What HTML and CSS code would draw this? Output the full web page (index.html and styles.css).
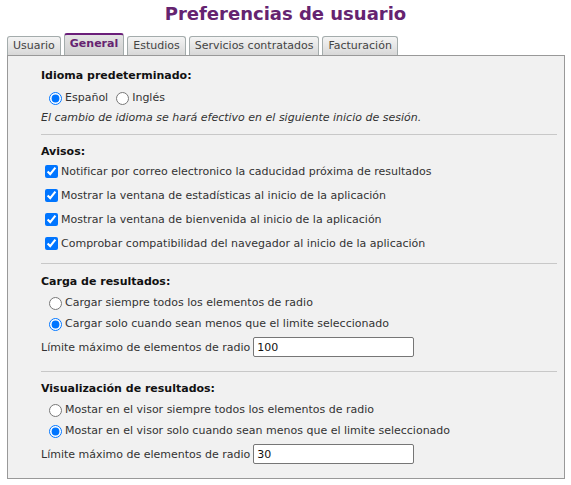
FILE: index.html
```html
<!DOCTYPE html>
<html lang="es">
<head>
<meta charset="utf-8">
<title>Preferencias de usuario</title>
<link rel="stylesheet" href="styles.css">
</head>
<body>
<h1 class="title">Preferencias de usuario</h1>
<div class="tabs">
  <div class="tab">Usuario</div>
  <div class="tab active">General</div>
  <div class="tab">Estudios</div>
  <div class="tab">Servicios contratados</div>
  <div class="tab">Facturación</div>
</div>
<div class="panel">
  <section class="group g-lang">
    <div class="heading">Idioma predeterminado:</div>
    <div class="inline-opts">
      <label class="opt"><input type="radio" name="lang" checked>Español</label>
      <label class="opt"><input type="radio" name="lang">Inglés</label>
    </div>
    <div class="note">El cambio de idioma se hará efectivo en el siguiente inicio de sesión.</div>
  </section>
  <section class="group g-avisos">
    <div class="heading">Avisos:</div>
    <div class="checks">
      <label class="chk"><input type="checkbox" checked>Notificar por correo electronico la caducidad próxima de resultados</label>
      <label class="chk"><input type="checkbox" checked>Mostrar la ventana de estadísticas al inicio de la aplicación</label>
      <label class="chk"><input type="checkbox" checked>Mostrar la ventana de bienvenida al inicio de la aplicación</label>
      <label class="chk"><input type="checkbox" checked>Comprobar compatibilidad del navegador al inicio de la aplicación</label>
    </div>
  </section>
  <section class="group g-carga">
    <div class="heading">Carga de resultados:</div>
    <div class="radios">
      <label class="opt"><input type="radio" name="carga">Cargar siempre todos los elementos de radio</label>
      <label class="opt"><input type="radio" name="carga" checked>Cargar solo cuando sean menos que el limite seleccionado</label>
    </div>
    <div class="limit"><span>Límite máximo de elementos de radio</span><input class="num" type="text" value="100"></div>
  </section>
  <section class="group last">
    <div class="heading">Visualización de resultados:</div>
    <div class="radios">
      <label class="opt"><input type="radio" name="vis">Mostar en el visor siempre todos los elementos de radio</label>
      <label class="opt"><input type="radio" name="vis" checked>Mostar en el visor solo cuando sean menos que el limite seleccionado</label>
    </div>
    <div class="limit"><span>Límite máximo de elementos de radio</span><input class="num" type="text" value="30"></div>
  </section>
</div>
</body>
</html>
```
FILE: styles.css
```css
html, body { margin: 0; padding: 0; background: #fff; }
body {
  font-family: "DejaVu Sans", Verdana, sans-serif;
  font-size: 11px;
  color: #333;
}
.title {
  margin: 0;
  padding-top: 2px;
  height: 31px;
  text-align: center;
  font-size: 18px;
  font-weight: bold;
  color: #652370;
  line-height: 24px;
}
.tabs {
  display: flex;
  align-items: flex-end;
  gap: 3px;
  padding-left: 7px;
  height: 22px;
}
.tab {
  height: 18px;
  line-height: 18px;
  padding: 0 5px;
  border: 1px solid #a4acac;
  border-bottom: none;
  border-radius: 3px 3px 0 0;
  background: linear-gradient(#f4f4f4, #d8d8d8);
  color: #444;
  font-size: 11px;
}
.tab.active {
  height: 20px;
  border-top: 2px solid #6b1f7a;
  font-weight: bold;
  color: #652370;
  background: linear-gradient(#e4e4e4, #d0d0d0);
}
.panel {
  margin: 0 6px 0 7px;
  border: 1px solid #999;
  background: #f1f1f1;
  padding: 11px 7px 14px 33px;
}
.group {
  border-bottom: 1px solid #c8c8c8;
  padding-bottom: 8px;
  margin-bottom: 8px;
}
.g-avisos { padding-bottom: 11px; margin-bottom: 9px; }
.g-carga { padding-bottom: 14px; }
.group.last { border-bottom: none; margin-bottom: 0; padding-bottom: 0; }
.heading {
  font-weight: bold;
  color: #111;
  font-size: 11px;
  line-height: 18px;
}
.inline-opts {
  display: flex;
  gap: 8px;
  padding-left: 8px;
  margin-top: 5px;
  line-height: 16px;
}
.opt, .chk {
  display: flex;
  align-items: center;
}
.opt input, .chk input {
  margin: 0 3px 0 0;
  width: 13px;
  height: 13px;
}
.note {
  font-style: italic;
  margin-top: 4px;
  line-height: 16px;
}
.checks {
  display: flex;
  flex-direction: column;
  gap: 7px;
  padding-left: 4px;
  margin-top: 2px;
}
.checks .chk { line-height: 17px; }
.radios {
  display: flex;
  flex-direction: column;
  gap: 5px;
  padding-left: 8px;
  margin-top: 4px;
}
.radios .opt { line-height: 16px; }
.limit {
  display: flex;
  align-items: center;
  margin-top: 5px;
}
.num {
  margin: 0 0 0 3px;
  width: 161px;
  height: 20px;
  box-sizing: border-box;
  border: 1px solid #767676;
  border-radius: 2px;
  background: #fff;
  padding: 0 3px;
  font: 11px "DejaVu Sans", Verdana, sans-serif;
  color: #111;
}
```
